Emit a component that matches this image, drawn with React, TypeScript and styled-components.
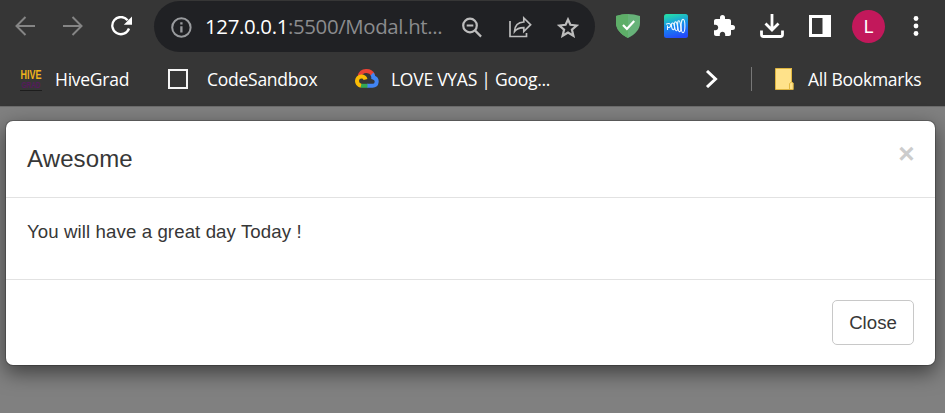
import React from "react";
import styled, { createGlobalStyle } from "styled-components";

const GlobalStyle = createGlobalStyle`
  *, *::before, *::after { box-sizing: border-box; }
  body {
    margin: 0;
    overflow: hidden;
    background: #808080;
    font-family: "Liberation Sans", Arial, sans-serif;
  }
`;

const Page = styled.div`
  height: 413px;
  overflow: hidden;
  background: #808080;
`;

const BrowserChrome = styled.header`
  height: 107px;
  background: #363636;
  border-bottom: 1px solid #6b6b6b;
  font-family: "Open Sans", "Noto Sans", sans-serif;
`;

const Toolbar = styled.div`
  display: flex;
  align-items: center;
  height: 52px;
  padding-left: 15px;
`;

const BookmarksBar = styled.nav`
  display: flex;
  align-items: center;
  height: 54px;
  padding-left: 19px;
`;

const Glyph = styled.svg<{ $gap?: number }>`
  display: block;
  flex: none;
  margin-left: ${(p) => p.$gap ?? 0}px;
`;

const AddressBar = styled.div`
  display: flex;
  align-items: center;
  flex: none;
  width: 441px;
  height: 51px;
  margin: 1px 0 0 21px;
  padding: 1px 0 0 17px;
  border-radius: 26px;
  background: #202124;
`;

const Url = styled.span`
  width: 240px;
  margin: -2px 0 0 13px;
  color: #8b8c8e;
  font-size: 20.4px;
  line-height: 28px;
  letter-spacing: -0.35px;
  white-space: nowrap;
`;

const Host = styled.span`
  color: #fff;
  letter-spacing: -0.34px;
`;

const Avatar = styled.div`
  display: grid;
  place-items: center;
  flex: none;
  width: 33px;
  height: 33px;
  margin: 1px 0 0 21px;
  border-radius: 50%;
  background: #c2185b;
  color: #fff;
  font: 18px/33px Roboto, sans-serif;
`;

const BookmarkLabel = styled.span<{ $width: number; $gap: number }>`
  flex: none;
  width: ${(p) => p.$width}px;
  margin: -1px 0 0 ${(p) => p.$gap}px;
  color: #fff;
  font-size: 17.5px;
  line-height: 26px;
  letter-spacing: -0.26px;
  white-space: nowrap;
`;

const Separator = styled.span`
  width: 1px;
  height: 24px;
  margin-left: 33px;
  background: #777;
`;

const HiveLogo = styled.span`
  display: flex;
  flex: none;
  flex-direction: column;
  align-items: center;
  width: 24px;
  height: 24px;
  padding-top: 1px;
`;

const HiveWord = styled.span<{ $color: string; $size: number; $height: number; $stretch: number }>`
  height: ${(p) => p.$height}px;
  color: ${(p) => p.$color};
  font: 700 ${(p) => p.$size}px/${(p) => p.$height}px "Liberation Sans", Arial, sans-serif;
  transform: scaleY(${(p) => p.$stretch});
`;

const HiveRule = styled.span`
  width: 22px;
  height: 1px;
  margin-top: 1px;
  background: #1d1d1d;
`;

const Modal = styled.section`
  width: 931px;
  height: 246px;
  margin: 13px 0 0 5px;
  border: 1px solid rgba(0, 0, 0, 0.2);
  border-radius: 8px;
  background: #fff;
  background-clip: padding-box;
  box-shadow: 0 7px 20px rgba(0, 0, 0, 0.5);
  color: #373737;
`;

const ModalHeader = styled.div`
  display: flex;
  justify-content: space-between;
  height: 77px;
  padding: 20px 20px 0 21px;
  border-bottom: 1px solid #e2e2e2;
`;

const Title = styled.h4`
  margin: 0;
  font-size: 24px;
  font-weight: 400;
  line-height: 35px;
  letter-spacing: 0.12px;
`;

const Dismiss = styled.button`
  width: 17px;
  height: 26px;
  padding: 0;
  border: 0;
  background: none;
  color: #ccc;
  font: 700 28px/26px "Liberation Sans", Arial, sans-serif;
`;

const ModalBody = styled.div`
  height: 81px;
  padding: 20px 21px;
`;

const Message = styled.p`
  margin: 0;
  font-size: 18.67px;
  line-height: 27px;
  letter-spacing: 0.09px;
`;

const ModalFooter = styled.div`
  display: flex;
  justify-content: flex-end;
  padding: 20px 21px;
  border-top: 1px solid #e2e2e2;
`;

const CloseButton = styled.button`
  width: 82px;
  height: 45px;
  padding: 0;
  border: 1px solid #c8c8c8;
  border-radius: 5px;
  background: #fff;
  color: #373737;
  font: 18.67px/27px "Liberation Sans", Arial, sans-serif;
`;

export default function App() {
  return (
    <Page>
      <GlobalStyle />
      <BrowserChrome>
        <Toolbar>
          <Glyph width="20" height="20" viewBox="0 0 20 20" fill="none" stroke="#858585" strokeWidth="2">
            <path d="M20 10H1.5M10.5 1 1.5 10l9 9" />
          </Glyph>
          <Glyph $gap={28} width="20" height="20" viewBox="0 0 20 20" fill="none" stroke="#858585" strokeWidth="2">
            <path d="M0 10h18.5M9.5 1l9 9-9 9" />
          </Glyph>
          <Glyph $gap={28} width="22" height="20" viewBox="0 0 22 20" fill="none">
            <path d="M16.6 4.2A8.6 8.6 0 1 0 18 12.500" stroke="#fff" strokeWidth="2.3" />
            <path d="M21 .5v8.200h-8.200z" fill="#fff" />
          </Glyph>
          <AddressBar>
            <Glyph width="21" height="21" viewBox="0 0 21 21" fill="none" stroke="#999b9e" strokeWidth="2">
              <circle cx="10.4" cy="10.5" r="9.2" />
              <path d="M10.4 9.2v6.3M10.4 5.2v2.2" strokeWidth="2.3" />
            </Glyph>
            <Url><Host>127.0.0.1</Host>:5500/Modal.ht...</Url>
            <Glyph $gap={17} width="20" height="21" viewBox="0 0 20 21" fill="none" stroke="#bdbdbd" strokeWidth="2.2">
              <circle cx="8" cy="8.5" r="6.8" />
              <path d="M12.9 13.4l6.2 6.2M4.7 8.5h6.6" />
            </Glyph>
            <Glyph $gap={27} width="23" height="22" viewBox="0 0 23 22" fill="none" stroke="#bdbdbd" strokeWidth="1.7">
              <path d="M1 5v15.5h16.5V17" />
              <path d="M14.8 2v4C9.500 6.200 5.800 9.500 5.500 15.500c2.200-3 5-3.900 9.300-3.900v3.900l6.800-6.800z" strokeLinejoin="miter" />
            </Glyph>
            <Glyph $gap={25} width="22" height="21" viewBox="0 0 22 21" fill="none" stroke="#bdbdbd" strokeWidth="2.200">
              <path d="M11 2.5l2.4 5.3 6.3.7-4.800 4.100 1.500 6.200-5.400-3.300-5.400 3.300 1.500-6.200-4.800-4.100 6.300-.7z" />
            </Glyph>
          </AddressBar>
          <Glyph $gap={21} width="24" height="24" viewBox="0 0 24 24">
            <path d="M12 0c4 0 8 .7 12 2v7c0 6-4.500 11.200-12 15C4.500 20.200 0 15 0 9V2C4 .7 8 0 12 0z" fill="#67b279" />
            <path d="M12 0C8 0 4 .7 0 2v7c0 6 4.500 11.200 12 15z" fill="#5eae68" />
            <path d="M7 10.900l3.900 4L18.200 7" fill="none" stroke="#fff" strokeWidth="2.200" />
          </Glyph>
          <Glyph $gap={24} width="24" height="24" viewBox="0 0 24 24" fill="none">
            <defs>
              <linearGradient id="wave-tile" x1=".3" y1="0" x2=".55" y2="1">
                <stop stopColor="#24dba9" />
                <stop offset=".5" stopColor="#168bef" />
                <stop offset="1" stopColor="#2448fb" />
              </linearGradient>
            </defs>
            <rect width="24" height="24" rx="2.500" fill="url(#wave-tile)" />
            <g stroke="#eef7ff" strokeWidth="1.100">
              <path d="M3.500 16v-4.500M2 10.300c3-1.700 5.300-.4 4.600 1.700-.5 1.500-2 1.800-3 1.300" />
              <ellipse cx="9" cy="12.400" rx="1.500" ry="3.400" transform="rotate(-10 9 12.400)" />
              <ellipse cx="12" cy="12.300" rx="1.500" ry="4.500" transform="rotate(-8 12 12.300)" />
              <ellipse cx="15.200" cy="12.200" rx="1.500" ry="5.500" transform="rotate(-6 15.200 12.200)" />
              <ellipse cx="19" cy="12" rx="1.900" ry="6.700" />
            </g>
          </Glyph>
          <Glyph $gap={24} width="24" height="24" viewBox="0 0 24 24" fill="#fff">
            <path d="M20.500 11H19V7c0-1.100-.9-2-2-2h-4V3.500a2.500 2.500 0 0 0-5 0V5H4c-1.100 0-1.990.9-1.990 2v3.800H3.500c1.490 0 2.700 1.210 2.700 2.700s-1.210 2.700-2.700 2.700H2V20c0 1.100.9 2 2 2h3.800v-1.500c0-1.490 1.210-2.700 2.700-2.700s2.700 1.210 2.700 2.700V22H17c1.100 0 2-.9 2-2v-4h1.500a2.500 2.500 0 0 0 0-5z" />
          </Glyph>
          <Glyph $gap={24} width="24" height="24" viewBox="0 0 24 24" fill="none" stroke="#fff" strokeWidth="2.800">
            <path d="M12 0v16M5.500 9.500L12 16l6.500-6.500M1.500 16.500v4q0 2 2 2h17q2 0 2-2v-4" />
          </Glyph>
          <Glyph $gap={25} width="22" height="22" viewBox="0 0 22 22">
            <path d="M0 0h22v22H0zM3 3v16h10.500V3z" fill="#fff" fillRule="evenodd" />
          </Glyph>
          <Avatar>L</Avatar>
          <Glyph $gap={28} width="6" height="22" viewBox="0 0 6 22" fill="#fff">
            <circle cx="3" cy="3.500" r="2.400" />
            <circle cx="3" cy="11" r="2.400" />
            <circle cx="3" cy="18.500" r="2.400" />
          </Glyph>
        </Toolbar>
        <BookmarksBar>
          <HiveLogo>
            <HiveWord $color="#f0b51c" $size={9} $height={12} $stretch={1.5}>HIVE</HiveWord>
            <HiveWord $color="#561a5e" $size={6.5} $height={9} $stretch={1.4}>GRAD</HiveWord>
            <HiveRule />
          </HiveLogo>
          <BookmarkLabel $gap={12} $width={75}>HiveGrad</BookmarkLabel>
          <Glyph $gap={38} width="20" height="20" viewBox="0 0 20 20" fill="none" stroke="#f5f5f5" strokeWidth="2">
            <path d="M1 1h18v18H1z" />
          </Glyph>
          <BookmarkLabel $gap={19} $width={112}>CodeSandbox</BookmarkLabel>
          <Glyph $gap={36} width="24" height="20" viewBox="0 0 24 20" fill="none" strokeWidth="4">
            <path d="M4.500 7C6.500 1 15 .2 18 6" stroke="#ea4335" />
            <path d="M17 5c1 1 1.300 2 1.300 3.500 5 1.300 4.200 8.300-.8 8.300H12" stroke="#4285f4" />
            <path d="M12.500 16.800H6" stroke="#34a853" />
            <path d="M6 16.800c-5.500-1-5.300-9.300.5-9.300 2.300 0 3.600 1.400 4 3" stroke="#fbbc05" />
          </Glyph>
          <BookmarkLabel $gap={12} $width={160}>LOVE VYAS | Goog...</BookmarkLabel>
          <Glyph $gap={154} width="13" height="18" viewBox="0 0 13 18" fill="none" stroke="#fff" strokeWidth="3">
            <path d="M2 1l8.500 8L2 17" />
          </Glyph>
          <Separator />
          <Glyph $gap={23} width="19" height="22" viewBox="0 0 19 22">
            <path d="M.5.5h16V14l1.700 1v6.500H.5z" fill="#ffe28a" stroke="#ddb43f" />
            <path d="M14.500 21v-5.500l2-1.500V0" fill="none" stroke="#e4b941" />
          </Glyph>
          <BookmarkLabel $gap={14} $width={120}>All Bookmarks</BookmarkLabel>
        </BookmarksBar>
      </BrowserChrome>
      <Modal role="dialog" aria-label="Awesome">
        <ModalHeader>
          <Title>Awesome</Title>
          <Dismiss aria-label="Dismiss">×</Dismiss>
        </ModalHeader>
        <ModalBody>
          <Message>You will have a great day Today !</Message>
        </ModalBody>
        <ModalFooter>
          <CloseButton>Close</CloseButton>
        </ModalFooter>
      </Modal>
    </Page>
  );
}
